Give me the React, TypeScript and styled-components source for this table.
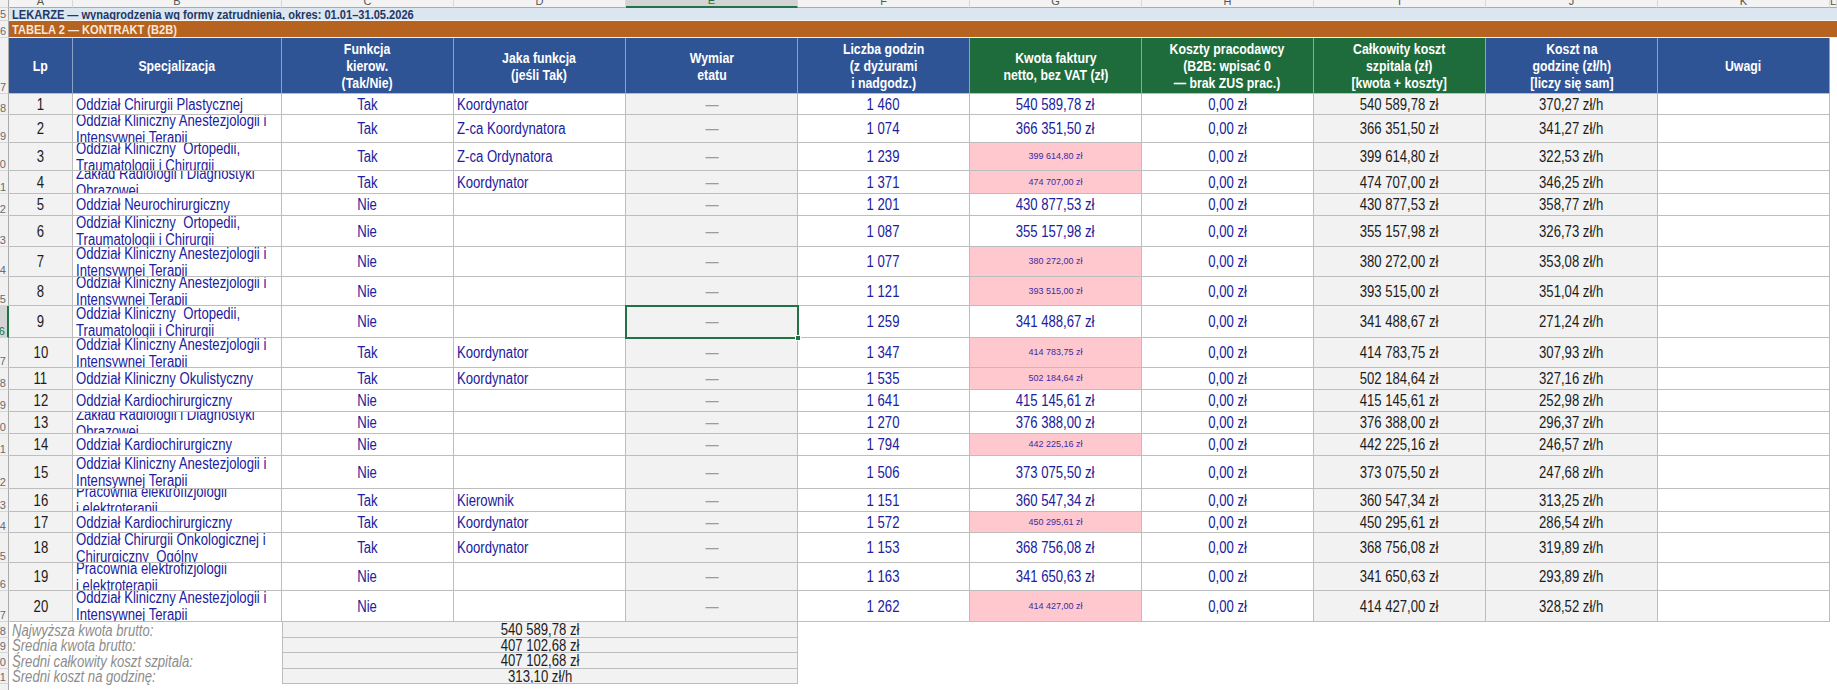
import React from 'react';
import styled, { createGlobalStyle, css } from 'styled-components';

const FONT = '"Liberation Sans", Arial, sans-serif';
const GRID = '9px 64px 209px repeat(9, 172px) 1fr';
const LINE = '#bdbdbd';
const EXCEL_GREEN = '#217346';
// the sheet was captured with a narrow-looking Arial, so cell text is squeezed horizontally
const SQUEEZE = 0.82;

const GlobalStyle = createGlobalStyle`
  *, *::before, *::after { box-sizing: border-box; }
  html, body { margin: 0; padding: 0; background: #ffffff; }
  body { font-family: ${FONT}; overflow: hidden; }
`;

const Sheet = styled.div`
  width: 1837px;
  height: 690px;
  overflow: hidden;
  display: flex;
  flex-direction: column;
  background: #fff;
`;

const Row = styled.div<{ $h: number }>`
  display: grid;
  grid-template-columns: ${GRID};
  height: ${(p) => p.$h}px;
  flex: none;
`;

const Txt = styled.span<{ $left?: boolean }>`
  display: inline-block;
  white-space: pre;
  transform: scaleX(${SQUEEZE});
  transform-origin: ${(p) => (p.$left ? 'left center' : 'center center')};
`;

const RowHead = styled.div<{ $active?: boolean }>`
  display: flex;
  justify-content: flex-end;
  align-items: flex-end;
  overflow: hidden;
  padding-right: 2px;
  background: ${(p) => (p.$active ? '#d4d4d4' : '#f1f1f1')};
  border-bottom: 1px solid #d6d6d6;
  border-right: ${(p) => (p.$active ? `2px solid ${EXCEL_GREEN}` : '1px solid #ababab')};
  color: ${(p) => (p.$active ? EXCEL_GREEN : '#6a6a6a')};
  font-size: 11px;
  line-height: 12px;
`;

const ColHead = styled.div<{ $active?: boolean }>`
  display: flex;
  justify-content: center;
  align-items: flex-end;
  overflow: hidden;
  background: ${(p) => (p.$active ? '#d4d4d4' : '#f3f3f3')};
  border-right: 1px solid #d9d9d9;
  border-bottom: ${(p) => (p.$active ? `2px solid ${EXCEL_GREEN}` : '1px solid #ababab')};
  color: ${(p) => (p.$active ? EXCEL_GREEN : '#555')};
  font-size: 11px;
  line-height: 12px;
`;

const Band = styled.div<{ $tone: 'blue' | 'brown' }>`
  grid-column: 2 / -1;
  display: flex;
  align-items: center;
  padding-left: 3px;
  overflow: hidden;
  white-space: nowrap;
  font-weight: 700;
  font-size: 13.5px;
  line-height: 13px;
  border-bottom: 1px solid #f4f4f4;
  ${(p) =>
    p.$tone === 'blue'
      ? css`
          background: #dce6f1;
          color: #1f3864;
        `
      : css`
          background: #b5631f;
          color: #fbe7d8;
        `}
`;

const HeadCell = styled.div<{ $green?: boolean }>`
  display: flex;
  align-items: center;
  justify-content: center;
  text-align: center;
  overflow: hidden;
  background: ${(p) => (p.$green ? '#1e6b3c' : '#2f5496')};
  color: #fff;
  font-weight: 700;
  font-size: 15px;
  line-height: 17px;
  border-right: 1px solid rgba(255, 255, 255, 0.45);
  border-bottom: 1px solid ${LINE};
`;

type Tone = 'white' | 'gray' | 'pink';
type Ink = 'blue' | 'black' | 'muted' | 'violet';

const TONES: Record<Tone, string> = { white: '#ffffff', gray: '#f2f2f2', pink: '#ffc7ce' };
const INKS: Record<Ink, string> = { blue: '#20209e', black: '#1c1c1c', muted: '#9c9c9c', violet: '#3a2ca4' };

const Cell = styled.div<{
  $tone?: Tone;
  $ink?: Ink;
  $left?: boolean;
  $small?: boolean;
  $selected?: boolean;
}>`
  position: relative;
  display: flex;
  align-items: center;
  justify-content: ${(p) => (p.$left ? 'flex-start' : 'center')};
  padding: 0 3px;
  white-space: pre;
  overflow: ${(p) => (p.$selected ? 'visible' : 'hidden')};
  background: ${(p) => TONES[p.$tone ?? 'white']};
  color: ${(p) => INKS[p.$ink ?? 'blue']};
  font-size: ${(p) => (p.$small ? '9px' : '16px')};
  line-height: 17px;
  border-right: 1px solid ${LINE};
  border-bottom: 1px solid ${LINE};
  ${(p) =>
    p.$selected &&
    css`
      z-index: 1;
      outline: 2px solid ${EXCEL_GREEN};
      outline-offset: -1px;
      &::after {
        content: '';
        position: absolute;
        right: -4px;
        bottom: -4px;
        width: 6px;
        height: 6px;
        background: ${EXCEL_GREEN};
        border: 1px solid #fff;
      }
    `}
`;

const Blank = styled.div``;

const SumLabel = styled.div`
  grid-column: span 2;
  display: flex;
  align-items: center;
  padding-left: 3px;
  white-space: nowrap;
  font-style: italic;
  font-size: 16px;
  line-height: 15px;
  color: #8c8c8c;
`;

const SumValue = styled.div`
  grid-column: span 3;
  display: flex;
  align-items: center;
  justify-content: center;
  overflow: hidden;
  background: #f2f2f2;
  border-left: 1px solid ${LINE};
  border-right: 1px solid ${LINE};
  border-bottom: 1px solid ${LINE};
  font-size: 16px;
  line-height: 15px;
  color: #1c1c1c;
`;

type DataCellProps = {
  tone?: Tone;
  ink?: Ink;
  left?: boolean;
  small?: boolean;
  selected?: boolean;
  children?: React.ReactNode;
};

const DataCell = ({ tone, ink, left, small, selected, children }: DataCellProps) => (
  <Cell $tone={tone} $ink={ink} $left={left} $small={small} $selected={selected}>
    {children == null || children === '' ? null : small ? children : <Txt $left={left}>{children}</Txt>}
  </Cell>
);

const LETTERS = ['A', 'B', 'C', 'D', 'E', 'F', 'G', 'H', 'I', 'J', 'K', 'L'];

const HEADERS: { text: string; green?: boolean }[] = [
  { text: 'Lp' },
  { text: 'Specjalizacja' },
  { text: 'Funkcja\nkierow.\n(Tak/Nie)' },
  { text: 'Jaka funkcja\n(jeśli Tak)' },
  { text: 'Wymiar\netatu' },
  { text: 'Liczba godzin\n(z dyżurami\ni nadgodz.)' },
  { text: 'Kwota faktury\nnetto, bez VAT (zł)', green: true },
  { text: 'Koszty pracodawcy\n(B2B: wpisać 0\n— brak ZUS prac.)', green: true },
  { text: 'Całkowity koszt\nszpitala (zł)\n[kwota + koszty]', green: true },
  { text: 'Koszt na\ngodzinę (zł/h)\n[liczy się sam]' },
  { text: 'Uwagi' },
];

const ANEST = 'Oddział Kliniczny Anestezjologii i\nIntensywnej Terapii';
const ORTO = 'Oddział Kliniczny  Ortopedii,\nTraumatologii i Chirurgii';
const RADIO = 'Zakład Radiologii i Diagnostyki\nObrazowej';
const ELEKTRO = 'Pracownia elektrofizjologii\ni elektroterapii';
const KARDIO = 'Oddział Kardiochirurgiczny';

type Doctor = {
  h: number;
  spec: string;
  boss: boolean;
  role?: string;
  hours: string;
  amount: string;
  flagged?: boolean;
  rate: string;
};

const DOCTORS: Doctor[] = [
  { h: 21, spec: 'Oddział Chirurgii Plastycznej', boss: true, role: 'Koordynator', hours: '1 460', amount: '540 589,78', rate: '370,27' },
  { h: 28, spec: ANEST, boss: true, role: 'Z-ca Koordynatora', hours: '1 074', amount: '366 351,50', rate: '341,27' },
  { h: 28, spec: ORTO, boss: true, role: 'Z-ca Ordynatora', hours: '1 239', amount: '399 614,80', flagged: true, rate: '322,53' },
  { h: 23, spec: RADIO, boss: true, role: 'Koordynator', hours: '1 371', amount: '474 707,00', flagged: true, rate: '346,25' },
  { h: 22, spec: 'Oddział Neurochirurgiczny', boss: false, hours: '1 201', amount: '430 877,53', rate: '358,77' },
  { h: 31, spec: ORTO, boss: false, hours: '1 087', amount: '355 157,98', rate: '326,73' },
  { h: 30, spec: ANEST, boss: false, hours: '1 077', amount: '380 272,00', flagged: true, rate: '353,08' },
  { h: 29, spec: ANEST, boss: false, hours: '1 121', amount: '393 515,00', flagged: true, rate: '351,04' },
  { h: 32, spec: ORTO, boss: false, hours: '1 259', amount: '341 488,67', rate: '271,24' },
  { h: 30, spec: ANEST, boss: true, role: 'Koordynator', hours: '1 347', amount: '414 783,75', flagged: true, rate: '307,93' },
  { h: 22, spec: 'Oddział Kliniczny Okulistyczny', boss: true, role: 'Koordynator', hours: '1 535', amount: '502 184,64', flagged: true, rate: '327,16' },
  { h: 22, spec: KARDIO, boss: false, hours: '1 641', amount: '415 145,61', rate: '252,98' },
  { h: 22, spec: RADIO, boss: false, hours: '1 270', amount: '376 388,00', rate: '296,37' },
  { h: 22, spec: KARDIO, boss: false, hours: '1 794', amount: '442 225,16', flagged: true, rate: '246,57' },
  { h: 33, spec: ANEST, boss: false, hours: '1 506', amount: '373 075,50', rate: '247,68' },
  { h: 23, spec: ELEKTRO, boss: true, role: 'Kierownik', hours: '1 151', amount: '360 547,34', rate: '313,25' },
  { h: 21, spec: KARDIO, boss: true, role: 'Koordynator', hours: '1 572', amount: '450 295,61', flagged: true, rate: '286,54' },
  { h: 30, spec: 'Oddział Chirurgii Onkologicznej i\nChirurgiczny  Ogólny', boss: true, role: 'Koordynator', hours: '1 153', amount: '368 756,08', rate: '319,89' },
  { h: 28, spec: ELEKTRO, boss: false, hours: '1 163', amount: '341 650,63', rate: '293,89' },
  { h: 31, spec: ANEST, boss: false, hours: '1 262', amount: '414 427,00', flagged: true, rate: '328,52' },
];

const SUMMARY = [
  { h: 16, label: 'Najwyższa kwota brutto:', value: '540 589,78 zł' },
  { h: 15, label: 'Średnia kwota brutto:', value: '407 102,68 zł' },
  { h: 16, label: 'Średni całkowity koszt szpitala:', value: '407 102,68 zł' },
  { h: 15, label: 'Średni koszt na godzinę:', value: '313,10 zł/h' },
];

const FIRST_DATA_ROW = 8;
const SELECTED_ROW = 16;

const DoctorRow = ({ d, index }: { d: Doctor; index: number }) => {
  const rowNo = FIRST_DATA_ROW + index;
  return (
    <Row $h={d.h}>
      <RowHead $active={rowNo === SELECTED_ROW}>{rowNo}</RowHead>
      <DataCell tone="gray" ink="black">{index + 1}</DataCell>
      <DataCell left>{d.spec}</DataCell>
      <DataCell>{d.boss ? 'Tak' : 'Nie'}</DataCell>
      <DataCell left>{d.role}</DataCell>
      <DataCell tone="gray" ink="muted" selected={rowNo === SELECTED_ROW}>
        —
      </DataCell>
      <DataCell>{d.hours}</DataCell>
      {d.flagged ? (
        <DataCell tone="pink" ink="violet" small>
          {d.amount} zł
        </DataCell>
      ) : (
        <DataCell>{d.amount} zł</DataCell>
      )}
      <DataCell>0,00 zł</DataCell>
      <DataCell tone="gray" ink="black">
        {d.amount} zł
      </DataCell>
      <DataCell tone="gray" ink="black">
        {d.rate} zł/h
      </DataCell>
      <DataCell />
      <Blank />
    </Row>
  );
};

export default function App() {
  return (
    <>
      <GlobalStyle />
      <Sheet>
        <Row $h={8}>
          <RowHead />
          {LETTERS.map((l) => (
            <ColHead key={l} $active={l === 'E'}>
              {l}
            </ColHead>
          ))}
        </Row>
        <Row $h={13}>
          <RowHead>5</RowHead>
          <Band $tone="blue">
            <Txt $left>LEKARZE — wynagrodzenia wg formy zatrudnienia, okres: 01.01–31.05.2026</Txt>
          </Band>
        </Row>
        <Row $h={17}>
          <RowHead>6</RowHead>
          <Band $tone="brown">
            <Txt $left>TABELA 2 — KONTRAKT (B2B)</Txt>
          </Band>
        </Row>
        <Row $h={56}>
          <RowHead>7</RowHead>
          {HEADERS.map((h) => (
            <HeadCell key={h.text} $green={h.green}>
              <Txt>{h.text}</Txt>
            </HeadCell>
          ))}
          <Blank />
        </Row>
        {DOCTORS.map((d, i) => (
          <DoctorRow key={i} d={d} index={i} />
        ))}
        {SUMMARY.map((s, i) => (
          <Row key={s.label} $h={s.h}>
            <RowHead>{FIRST_DATA_ROW + DOCTORS.length + i}</RowHead>
            <SumLabel>
              <Txt $left>{s.label}</Txt>
            </SumLabel>
            <SumValue>
              <Txt>{s.value}</Txt>
            </SumValue>
          </Row>
        ))}
        <Row $h={20}>
          <RowHead>{FIRST_DATA_ROW + DOCTORS.length + SUMMARY.length}</RowHead>
        </Row>
      </Sheet>
    </>
  );
}
